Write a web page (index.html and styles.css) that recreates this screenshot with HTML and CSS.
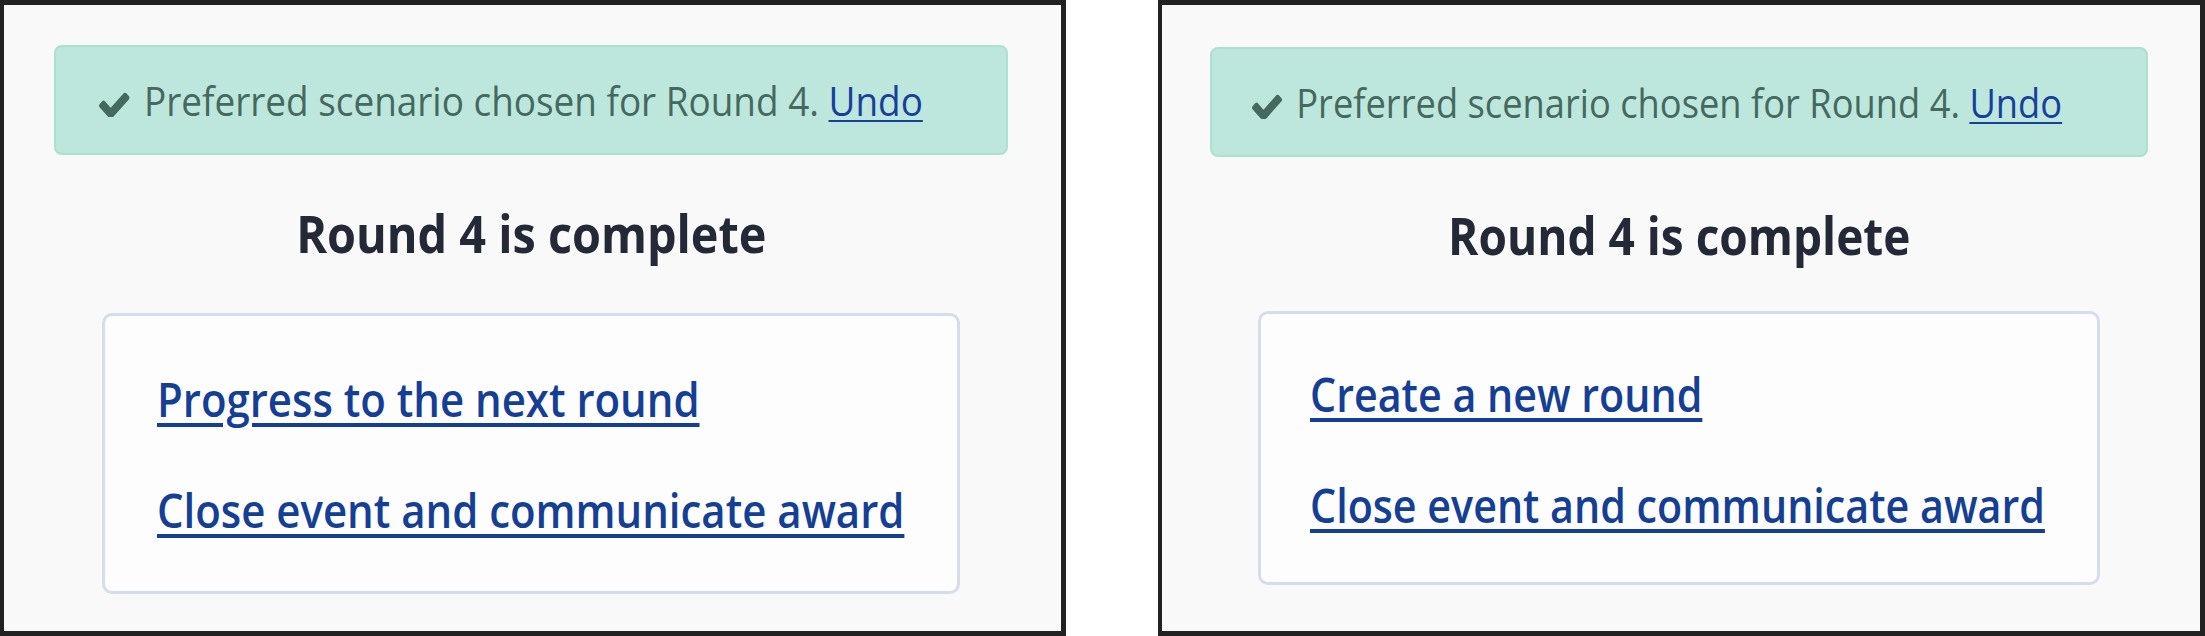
FILE: index.html
```html
<!DOCTYPE html>
<html lang="en">
<head>
    <meta charset="UTF-8">
    <title>Round complete</title>
    <link rel="stylesheet" href="styles.css">
</head>
<body>
    <div class="pair">
        <section class="panel panel-a">
            <div class="alert">
                <span class="squash"><svg class="check" viewBox="121 318 1550 1110"><path d="M1671 566q0 40-28 68l-724 724-136 136q-28 28-68 28t-68-28l-136-136-362-362q-28-28-28-68t28-68l136-136q28-28 68-28t68 28l294 295 656-657q28-28 68-28t68 28l136 136q28 28 28 68z"/></svg>Preferred scenario chosen for Round 4. <a href="#">Undo</a></span>
            </div>
            <h2><span class="squash">Round 4 is complete</span></h2>
            <div class="actions">
                <a href="#">Progress to the next round</a>
                <a href="#">Close event and communicate award</a>
            </div>
        </section>

        <section class="panel panel-b">
            <div class="alert">
                <span class="squash"><svg class="check" viewBox="121 318 1550 1110"><path d="M1671 566q0 40-28 68l-724 724-136 136q-28 28-68 28t-68-28l-136-136-362-362q-28-28-28-68t28-68l136-136q28-28 68-28t68 28l294 295 656-657q28-28 68-28t68 28l136 136q28 28 28 68z"/></svg>Preferred scenario chosen for Round 4. <a href="#">Undo</a></span>
            </div>
            <h2><span class="squash">Round 4 is complete</span></h2>
            <div class="actions">
                <a href="#">Create a new round</a>
                <a href="#">Close event and communicate award</a>
            </div>
        </section>
    </div>
</body>
</html>
```

FILE: styles.css
```css
body { margin: 0; background: #fff; font-family: "Open Sans", "Noto Sans", sans-serif; }
.pair { display: flex; justify-content: space-between; height: 636px; }
.panel { box-sizing: border-box; height: 636px; border: 5px solid #222; border-width: 5px 5px 5px 4px; background: #f9f9f9; display: flex; flex-direction: column; }
.panel-a { width: 1066px; padding: 40px 53px 0 50px; }
.panel-b { width: 1047px; padding: 42px 52px 0 48px; }

/* the text in the shot is drawn a little narrow */
.squash, .actions a { display: inline-block; transform: scaleX(0.9); transform-origin: left center; white-space: nowrap; }
.panel-b .squash, .panel-b .actions a { transform: scaleX(0.885); }
h2 .squash { transform-origin: center; }

.alert { border: 2px solid #ace0cf; border-radius: 8px; background: #bde7dc; color: #45695e; font-size: 41px; line-height: 46px; padding: 30px 43px; }
.panel-b .alert { padding-left: 40px; }
.alert .check { width: 34px; height: 25px; fill: #45695e; margin-right: 16px; vertical-align: -1px; }
.alert a { color: #17409a; text-decoration-thickness: 2px; text-underline-offset: 4px; }

h2 { margin: 48px 0 0; text-align: center; font-size: 52px; line-height: 60px; font-weight: 700; color: #232936; }

.actions { margin: 50px 48px 0; border: 3px solid #d4ddec; border-radius: 10px; background: #fdfdfd; padding: 55px 52px 53px; display: flex; flex-direction: column; align-items: flex-start; gap: 55px; }
.panel-b .actions { margin-top: 46px; padding: 52px 49px 49px; }
.actions a { font-size: 46.6px; line-height: 56px; font-weight: 600; color: #153f94; text-decoration-thickness: 4px; text-underline-offset: 6px; }
```
